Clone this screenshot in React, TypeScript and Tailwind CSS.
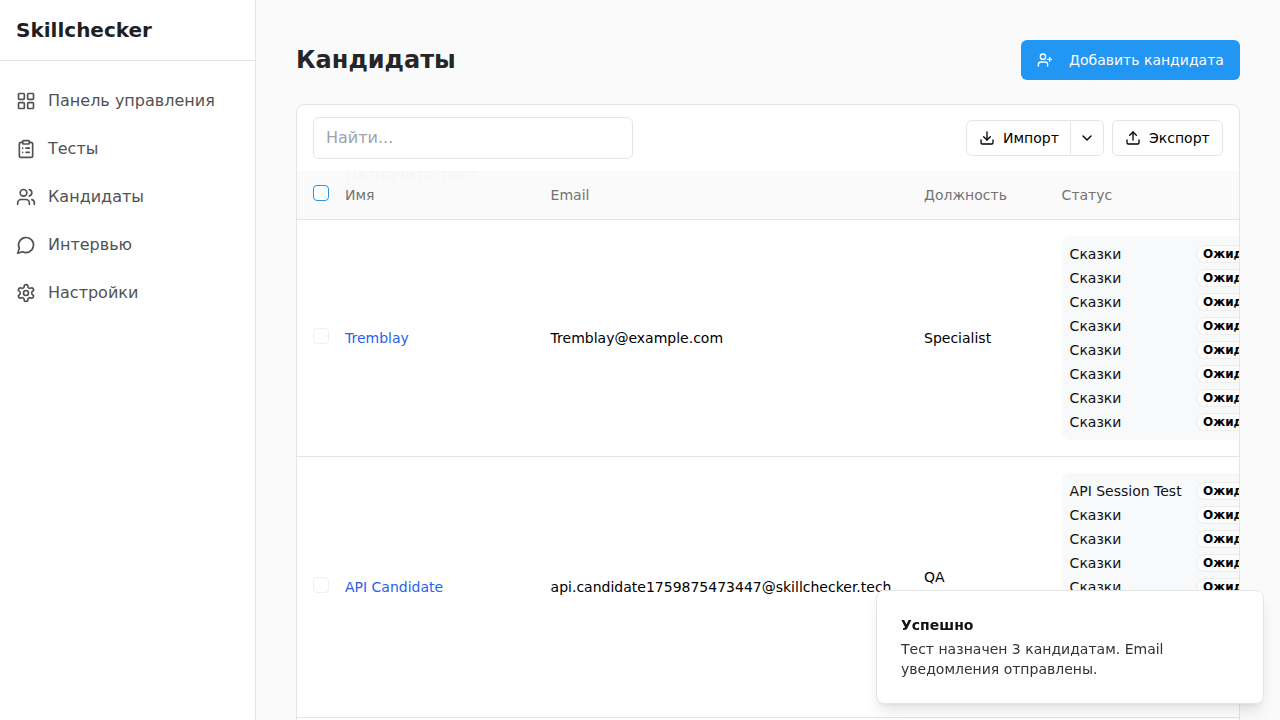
import { ChevronDown, ClipboardList, Download, LayoutGrid, Upload, UserPlus, Users } from "lucide-react";

type IconProps = { size?: number; strokeWidth?: number; className?: string };

const ChatIcon = ({ size = 20, strokeWidth = 2, className }: IconProps) => (
  <svg width={size} height={size} viewBox="0 0 24 24" fill="none" stroke="currentColor" strokeWidth={strokeWidth} strokeLinecap="round" strokeLinejoin="round" className={className}>
    <path d="M7.9 20A9 9 0 1 0 4 16.1L2 22Z" />
  </svg>
);

const GearIcon = ({ size = 20, strokeWidth = 2, className }: IconProps) => (
  <svg width={size} height={size} viewBox="0 0 24 24" fill="none" stroke="currentColor" strokeWidth={strokeWidth} strokeLinecap="round" strokeLinejoin="round" className={className}>
    <path d="M12.22 2h-.44a2 2 0 0 0-2 2v.18a2 2 0 0 1-1 1.73l-.43.25a2 2 0 0 1-2 0l-.15-.08a2 2 0 0 0-2.73.73l-.22.38a2 2 0 0 0 .73 2.73l.15.1a2 2 0 0 1 1 1.72v.51a2 2 0 0 1-1 1.74l-.15.09a2 2 0 0 0-.73 2.73l.22.38a2 2 0 0 0 2.73.73l.15-.08a2 2 0 0 1 2 0l.43.25a2 2 0 0 1 1 1.73V20a2 2 0 0 0 2 2h.44a2 2 0 0 0 2-2v-.18a2 2 0 0 1 1-1.73l.43-.25a2 2 0 0 1 2 0l.15.08a2 2 0 0 0 2.73-.73l.22-.39a2 2 0 0 0-.73-2.73l-.15-.08a2 2 0 0 1-1-1.74v-.5a2 2 0 0 1 1-1.74l.15-.09a2 2 0 0 0 .73-2.73l-.22-.38a2 2 0 0 0-2.73-.73l-.15.08a2 2 0 0 1-2 0l-.43-.25a2 2 0 0 1-1-1.73V4a2 2 0 0 0-2-2z" />
    <circle cx="12" cy="12" r="3" />
  </svg>
);

const nav = [
  { label: "Панель управления", icon: LayoutGrid },
  { label: "Тесты", icon: ClipboardList },
  { label: "Кандидаты", icon: Users },
  { label: "Интервью", icon: ChatIcon },
  { label: "Настройки", icon: GearIcon },
];

const rows = [
  {
    name: "Tremblay",
    email: "Tremblay@example.com",
    role: ["Specialist"],
    tests: ["Сказки", "Сказки", "Сказки", "Сказки", "Сказки", "Сказки", "Сказки", "Сказки"],
  },
  {
    name: "API Candidate",
    email: "api.candidate1759875473447@skillchecker.tech",
    role: ["QA", "Engineer"],
    tests: ["API Session Test", "Сказки", "Сказки", "Сказки", "Сказки", "Сказки", "Сказки", "Сказки", "Сказки"],
  },
];

export default function App() {
  return (
    <div className="flex h-screen overflow-hidden bg-[#fafafa] text-[#1f1f1f] font-['DejaVu_Sans',sans-serif]">
      <aside className="w-[256px] shrink-0 bg-white border-r border-[#e5e5e5]">
        <div className="h-[61px] flex items-center px-4 border-b border-[#e5e5e5] text-[20px] font-bold text-[#1f1f1f]">
          Skillchecker
        </div>
        <nav className="pt-4">
          {nav.map((item) => (
            <div key={item.label} className="h-12 flex items-center gap-[12px] pl-4 text-[#525252] text-base">
              <item.icon size={20} strokeWidth={2} className="text-[#525252]" />
              <span>{item.label}</span>
            </div>
          ))}
        </nav>
      </aside>

      <main className="flex-1 min-w-0 pt-10 pl-10 pr-10">
        <div className="h-10 flex items-center justify-between mb-6">
          <h1 className="text-2xl font-bold text-[#262626]">Кандидаты</h1>
          <button className="h-10 w-[219px] flex items-center pl-4 gap-[16px] rounded-md bg-[#2196f3] text-white text-sm">
            <UserPlus size={16} strokeWidth={2} />
            <span>Добавить кандидата</span>
          </button>
        </div>

        <div className="relative bg-white border border-[#e5e5e5] rounded-lg overflow-hidden h-[700px]">
          <div className="h-[66px] flex items-start justify-between pl-4 pr-4 pt-3">
            <input
              placeholder="Найти..."
              className="w-[320px] h-[42px] px-3 pb-[2px] rounded-md border border-[#e5e5e5] bg-white text-base outline-none placeholder:text-[#9ca3af]"
            />
            <div className="flex items-center gap-[8px] pt-[3px]">
              <div className="flex h-9 border border-[#e5e5e5] rounded-md text-sm text-black">
                <div className="w-[104px] flex items-center gap-[8px] pl-3 border-r border-[#e5e5e5]">
                  <Download size={16} strokeWidth={2} />
                  <span>Импорт</span>
                </div>
                <div className="w-[32px] flex items-center justify-center">
                  <ChevronDown size={16} strokeWidth={2} />
                </div>
              </div>
              <div className="w-[111px] h-9 flex items-center gap-[8px] pl-3 border border-[#e5e5e5] rounded-md text-sm text-black">
                <Upload size={16} strokeWidth={2} />
                <span>Экспорт</span>
              </div>
            </div>
          </div>

          <table className="table-fixed w-[1149px] border-collapse text-sm text-black">
            <colgroup>
              <col className="w-[32px]" />
              <col className="w-[206px]" />
              <col className="w-[373px]" />
              <col className="w-[138px]" />
              <col className="w-[400px]" />
            </colgroup>
            <thead>
              <tr className="h-[48px] bg-[#fafafa] border-b border-[#e5e5e5] text-[#737373] text-left">
                <th className="pl-4">
                  <div className="w-4 h-4 mb-1 rounded border border-[#2196f3] bg-white" />
                </th>
                <th className="px-4 font-normal">Имя</th>
                <th className="px-4 font-normal"><div className="ml-[-0.4px]">Email</div></th>
                <th className="px-4 font-normal">Должность</th>
                <th className="px-4 font-normal"><div className="ml-[-0.4px]">Статус</div></th>
              </tr>
            </thead>
            <tbody>
              {rows.map((row) => (
                <tr key={row.name} className="border-b border-[#e5e5e5]">
                  <td className="pl-4">
                    <div className="w-4 h-4 mb-1 rounded border border-[#f0f0f0] bg-white" />
                  </td>
                  <td className="px-4 text-[#2563eb]">{row.name}</td>
                  <td className="pl-4 whitespace-nowrap"><div className="ml-[-0.4px]">{row.email}</div></td>
                  <td className="px-4 leading-5">
                    {row.role.map((line) => (
                      <div key={line}>{line}</div>
                    ))}
                  </td>
                  <td className="px-4 py-4">
                    <div className="w-[300px] ml-[-0.4px] rounded-lg bg-[#f8f9fa] p-[6px_8px]">
                      {row.tests.map((test, i) => (
                        <div key={i} className="h-6 flex items-center">
                          <span className="w-[126.4px] text-[#111111]">{test}</span>
                          <span className="h-[18px] flex items-center px-[6px] rounded-full border border-[#ececec] bg-[#fcfcfc] text-xs font-bold text-black whitespace-nowrap">
                            Ожидает
                          </span>
                        </div>
                      ))}
                    </div>
                  </td>
                </tr>
              ))}
            </tbody>
          </table>

          {/* closing dialog still fading out over the table */}
          <div className="absolute left-[48px] top-[58px] text-base text-black opacity-[0.012] pointer-events-none">
            Назначить тест
          </div>
        </div>
      </main>

      <div className="fixed left-[876px] top-[590px] w-[388px] h-[114px] pt-6 px-6 bg-white border border-[#e5e5e5] rounded-lg shadow-lg text-sm">
        <div className="font-bold text-[#111111] leading-5">Успешно</div>
        <div className="text-[#333333] leading-5 mt-1">Тест назначен 3 кандидатам. Email уведомления отправлены.</div>
      </div>
    </div>
  );
}
